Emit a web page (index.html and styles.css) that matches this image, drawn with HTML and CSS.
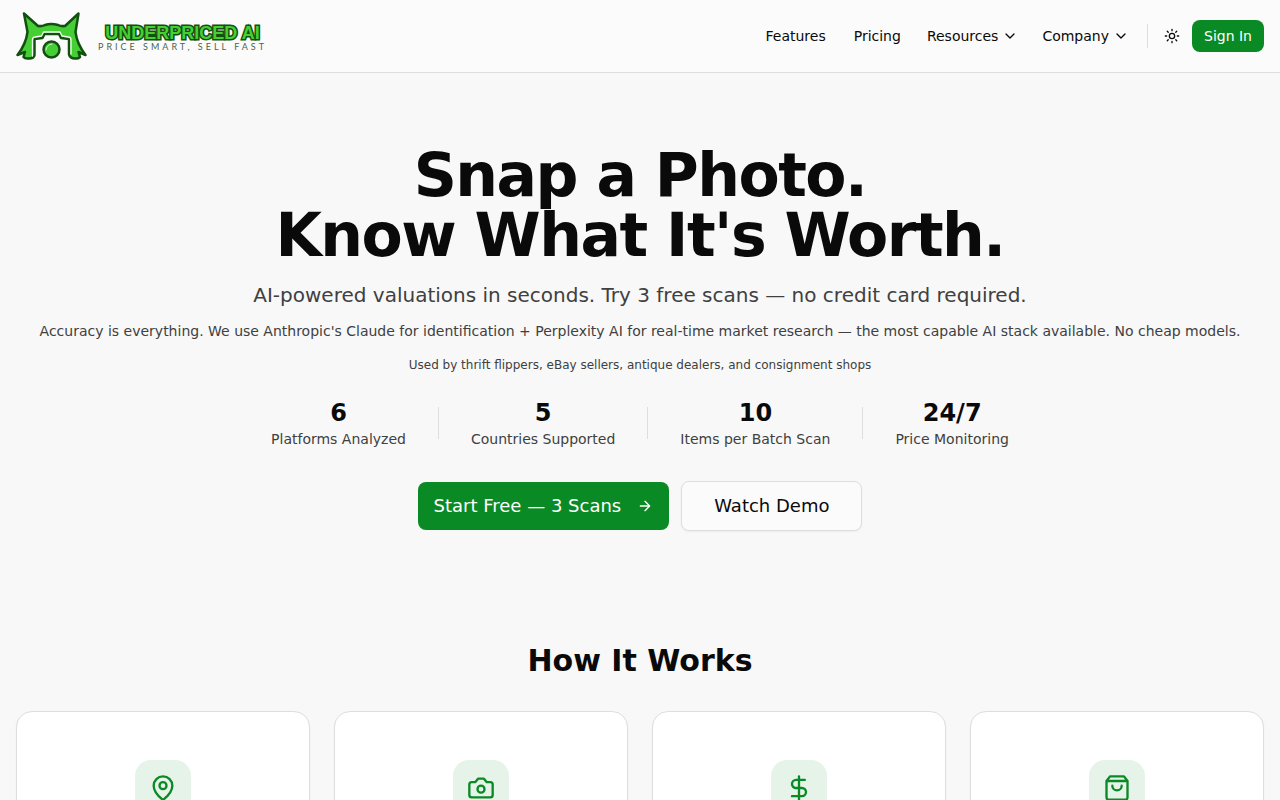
FILE: index.html
```html
<!DOCTYPE html>
<html lang="en">
<head>
    <meta charset="UTF-8">
    <meta name="viewport" content="width=device-width, initial-scale=1.0">
    <title>Underpriced AI</title>
    <link rel="stylesheet" href="styles.css">
</head>
<body>
    <header class="header">
        <a class="logo" href="#">
            <svg class="logo-mark" viewBox="0 0 72 48" aria-hidden="true">
                <path class="mark-body" d="M8 1.5 L22 14 Q26 14.500 29 13 Q35 11 42 13 Q45 14.500 49 14 L62.500 1.500 L59.500 20 Q61 32 69.500 43 L62.500 40 L64 45 Q62 47 59 46.500 Q54 46.500 53 42.500 L53 27 L45 26 L43 22 L28.500 22 L26.500 26 L18.500 27 L18.500 43 Q18 46.500 13 46.500 Q9 47 7.500 45 L9 40 L1.500 43 Q10 32 11.500 20 Z"/>
                <path class="mark-shine" d="M16.500 44 L16.500 28 Q16.500 25 19 25 L25.500 24 L27.500 20 L44 20 L46 24 L52.500 25 Q55 25 55 28 L55 42"/>
                <circle class="mark-lens" cx="35.500" cy="37.500" r="8"/>
                <path class="mark-glint" d="M30 38 A6 6 0 0 1 36 32"/>
            </svg>
            <span class="logo-text">
                <span class="logo-name">UNDERPRICED AI</span>
                <span class="logo-tagline">PRICE SMART, SELL FAST</span>
            </span>
        </a>
        <nav class="nav">
            <a class="nav-link" href="#features">Features</a>
            <a class="nav-link" href="#pricing">Pricing</a>
            <button class="nav-menu" type="button">Resources
                <svg class="icon" viewBox="0 0 24 24" aria-hidden="true"><path d="m6 9 6 6 6-6"/></svg>
            </button>
            <button class="nav-menu" type="button">Company
                <svg class="icon" viewBox="0 0 24 24" aria-hidden="true"><path d="m6 9 6 6 6-6"/></svg>
            </button>
            <div class="nav-actions">
                <button class="theme-toggle" type="button" aria-label="Toggle theme">
                    <svg class="icon" viewBox="0 0 24 24" aria-hidden="true">
                        <circle cx="12" cy="12" r="4"/>
                        <path d="M12 2v2M12 20v2m-7.070-17.070 1.410 1.410M17.660 17.660l1.410 1.410M2 12h2M20 12h2M6.340 17.660l-1.410 1.410M19.070 4.930l-1.410 1.410"/>
                    </svg>
                </button>
                <a class="sign-in" href="#signin">Sign In</a>
            </div>
        </nav>
    </header>

    <main>
        <section class="hero">
            <h1>Snap a Photo.<br>Know What It's Worth.</h1>
            <p class="hero-lead">AI-powered valuations in seconds. Try 3 free scans — no credit card required.</p>
            <p class="hero-note">Accuracy is everything. We use Anthropic's Claude for identification + Perplexity AI for real-time market research — the most capable AI stack available. No cheap models.</p>
            <p class="hero-users">Used by thrift flippers, eBay sellers, antique dealers, and consignment shops</p>

            <div class="stats">
                <div class="stat">
                    <div class="stat-value">6</div>
                    <div class="stat-label">Platforms Analyzed</div>
                </div>
                <div class="stat-divider"></div>
                <div class="stat">
                    <div class="stat-value">5</div>
                    <div class="stat-label">Countries Supported</div>
                </div>
                <div class="stat-divider"></div>
                <div class="stat">
                    <div class="stat-value">10</div>
                    <div class="stat-label">Items per Batch Scan</div>
                </div>
                <div class="stat-divider"></div>
                <div class="stat">
                    <div class="stat-value">24/7</div>
                    <div class="stat-label">Price Monitoring</div>
                </div>
            </div>

            <div class="hero-buttons">
                <a class="btn btn-primary" href="#start">Start Free — 3 Scans
                    <svg class="icon" viewBox="0 0 24 24" aria-hidden="true"><path d="M5 12h14M12 5l7 7-7 7"/></svg>
                </a>
                <button class="btn btn-outline" type="button">Watch Demo</button>
            </div>
        </section>

        <section class="steps">
            <h2>How It Works</h2>
            <div class="step-grid">
                <div class="step-card">
                    <div class="step-icon">
                        <svg viewBox="0 0 24 24" aria-hidden="true">
                            <path d="M20 10c0 5-5.500 10.200-7.400 11.800a1 1 0 0 1-1.200 0C9.500 20.200 4 15 4 10a8 8 0 0 1 16 0"/>
                            <circle cx="12" cy="10" r="3"/>
                        </svg>
                    </div>
                </div>
                <div class="step-card">
                    <div class="step-icon">
                        <svg viewBox="0 0 24 24" aria-hidden="true">
                            <path d="M14.500 4h-5L7 7H4a2 2 0 0 0-2 2v9a2 2 0 0 0 2 2h16a2 2 0 0 0 2-2V9a2 2 0 0 0-2-2h-3z"/>
                            <circle cx="12" cy="13" r="3"/>
                        </svg>
                    </div>
                </div>
                <div class="step-card">
                    <div class="step-icon">
                        <svg viewBox="0 0 24 24" aria-hidden="true">
                            <path d="M12 2v20M17 5H9.500a3.500 3.500 0 0 0 0 7h5a3.500 3.500 0 0 1 0 7H6"/>
                        </svg>
                    </div>
                </div>
                <div class="step-card">
                    <div class="step-icon">
                        <svg viewBox="0 0 24 24" aria-hidden="true">
                            <path d="M6 2 3 6v14a2 2 0 0 0 2 2h14a2 2 0 0 0 2-2V6l-3-4zM3 6h18M16 10a4 4 0 0 1-8 0"/>
                        </svg>
                    </div>
                </div>
            </div>
        </section>
    </main>
</body>
</html>
```
FILE: styles.css
```css
* {
    margin: 0;
    padding: 0;
    box-sizing: border-box;
}

body {
    font-family: 'DejaVu Sans', sans-serif;
    font-size: 14px;
    line-height: 20px;
    background-color: #f8f8f8;
    color: #0a0a0a;
}

a {
    color: inherit;
    text-decoration: none;
}

button {
    font: inherit;
    color: inherit;
    background: none;
    border: none;
    cursor: pointer;
}

svg {
    fill: none;
    stroke: currentColor;
    stroke-width: 2;
    stroke-linecap: round;
    stroke-linejoin: round;
    flex-shrink: 0;
}

.icon {
    width: 16px;
    height: 16px;
}

/* Header */
.header {
    display: flex;
    justify-content: space-between;
    align-items: center;
    padding: 12px 16px;
    background-color: #fbfbfb;
    border-bottom: 1px solid #dedede;
}

.logo {
    display: flex;
    align-items: center;
    gap: 10px;
}

.logo-mark {
    width: 72px;
    height: 48px;
}

.mark-body {
    fill: #45cf35;
    stroke: #12500f;
    stroke-width: 2.5;
}

.mark-shine {
    stroke: #f4fff2;
    stroke-width: 1.3;
}

.mark-lens {
    fill: #45cf35;
    stroke: #12500f;
    stroke-width: 2.5;
}

.mark-glint {
    stroke: #c9f7c0;
    stroke-width: 1;
}

.logo-text {
    display: flex;
    flex-direction: column;
    align-items: center;
    padding-top: 4px;
}

.logo-name {
    font-family: 'Liberation Sans', sans-serif;
    font-size: 18px;
    font-weight: bold;
    line-height: 18px;
    color: #45cf35;
    -webkit-text-stroke: 3px #12500f;
    paint-order: stroke fill;
}

.logo-tagline {
    font-family: 'Lato', sans-serif;
    font-size: 9px;
    line-height: 10px;
    letter-spacing: 3px;
    color: #4c634b;
}

.nav {
    display: flex;
    align-items: center;
    gap: 24px;
}

.nav-link {
    padding: 0 2px;
}

.nav-menu {
    display: flex;
    align-items: center;
    gap: 4px;
}

.nav-actions {
    display: flex;
    align-items: center;
    margin-left: -6px;
    border-left: 1px solid #dedede;
    height: 24px;
}

.theme-toggle {
    display: flex;
    padding: 8px 12px 8px 16px;
}

.sign-in {
    padding: 6px 12px;
    border-radius: 8px;
    background-color: #0a8a25;
    color: #ffffff;
}

/* Hero */
.hero {
    padding: 72px 16px 56px;
    text-align: center;
}

h1 {
    font-size: 60px;
    line-height: 60px;
    letter-spacing: -0.025em;
}

.hero-lead {
    margin-top: 16px;
    font-size: 20px;
    line-height: 28px;
    color: #404040;
}

.hero-note {
    margin-top: 12px;
    color: #404040;
}

.hero-users {
    margin-top: 16px;
    font-size: 12px;
    line-height: 16px;
    color: #404040;
}

.stats {
    display: flex;
    justify-content: center;
    align-items: center;
    gap: 32px;
    margin-top: 24px;
}

.stat-value {
    font-size: 24px;
    font-weight: bold;
    line-height: 32px;
}

.stat-label {
    color: #404040;
}

.stat-divider {
    width: 1px;
    height: 32px;
    background-color: #dedede;
}

.hero-buttons {
    display: flex;
    justify-content: center;
    align-items: center;
    gap: 12px;
    margin-top: 32px;
}

.btn {
    display: flex;
    align-items: center;
    gap: 16px;
    border-radius: 8px;
    font-size: 18px;
    line-height: 28px;
}

.btn-primary {
    padding: 10px 16px;
    background-color: #0a8a25;
    color: #ffffff;
}

.btn-outline {
    padding: 10px 32px;
    border: 1px solid #dedede;
    background-color: #fbfbfb;
    box-shadow: 0 1px 2px rgba(0, 0, 0, 0.05);
}

/* How it works */
.steps {
    padding: 56px 16px;
}

h2 {
    margin-bottom: 32px;
    font-size: 30px;
    line-height: 36px;
    text-align: center;
}

.step-grid {
    display: grid;
    grid-template-columns: repeat(4, 1fr);
    gap: 24px;
}

.step-card {
    display: flex;
    justify-content: center;
    padding: 48px 24px;
    border: 1px solid #dedede;
    border-radius: 16px;
    background-color: #ffffff;
    box-shadow: 0 1px 2px rgba(0, 0, 0, 0.05);
}

.step-icon {
    display: flex;
    justify-content: center;
    align-items: center;
    width: 56px;
    height: 56px;
    border-radius: 16px;
    background-color: #e6f3e9;
    color: #0a8a25;
}

.step-icon svg {
    width: 28px;
    height: 28px;
}
```
